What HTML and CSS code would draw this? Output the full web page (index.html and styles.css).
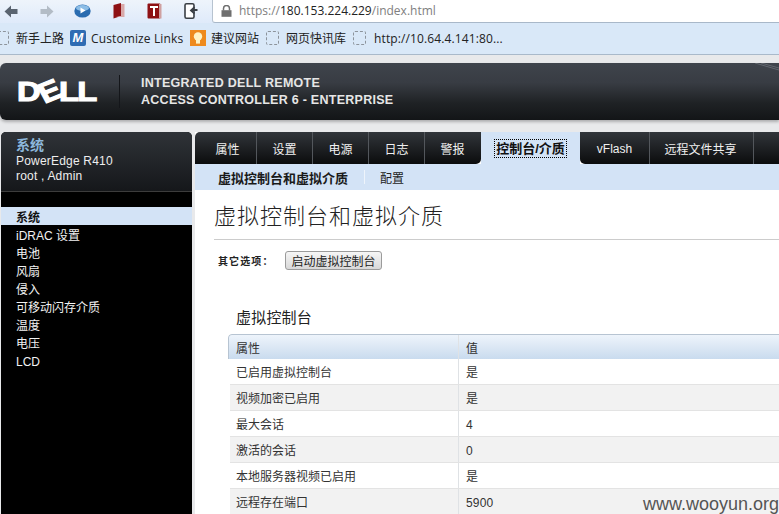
FILE: index.html
```html
<!DOCTYPE html>
<html lang="zh">
<head>
<meta charset="utf-8">
<title>iDRAC6</title>
<link rel="stylesheet" href="styles.css">
</head>
<body>
<div class="browser">
  <div class="nav-row">
    <div class="nav-icons">
      <svg class="ic ic-back" viewBox="0 0 14 13"><path d="M7 0.5 L0.5 6.5 L7 12.5 V9 H13.5 V4 H7 Z" fill="#5a6470"/></svg>
      <svg class="ic ic-fwd" viewBox="0 0 14 13"><path d="M7 0.5 L13.5 6.5 L7 12.5 V9 H0.5 V4 H7 Z" fill="#b3bcc6"/></svg>
      <svg class="ic ic-play" viewBox="0 0 17 14"><ellipse cx="8.5" cy="7" rx="8.2" ry="6.6" fill="#2a6cb0"/><ellipse cx="8.5" cy="4" rx="6.5" ry="3" fill="#8cbde6"/><path d="M6.5 3.5 L11.5 6.5 L6.5 9.5 Z" fill="#fff"/></svg>
      <svg class="ic ic-book" viewBox="0 0 12 16"><path d="M0.5 2 L8 0 V13 L0.5 15.5 Z" fill="#8e1114"/><path d="M8 1 H11.5 V14 H3 L8 13 Z" fill="#d9a9a9"/></svg>
      <svg class="ic ic-t" viewBox="0 0 15 16"><rect x="0.5" y="0.5" width="13" height="15" rx="1" fill="#8e1114"/><rect x="12" y="1" width="2.5" height="14.5" fill="#cfa0a0"/><path d="M3 3 H11 V5 H8 V13 H6 V5 H3 Z" fill="#fff"/></svg>
      <svg class="ic ic-exit" viewBox="0 0 14 16"><rect x="1" y="0.8" width="9" height="14.4" rx="1.5" fill="#fff" stroke="#3a3f45" stroke-width="1.6"/><path d="M13.5 7 H8 M10.5 4.2 L7 7.5 L10.5 10.5" fill="none" stroke="#3a3f45" stroke-width="1.8"/></svg>
    </div>
    <div class="address">
      <svg class="lock" viewBox="0 0 11 12"><path d="M2.5 5.5 V3.5 A3 3 0 0 1 8.5 3.5 V5.5" fill="none" stroke="#6f6f6f" stroke-width="1.5"/><rect x="0.5" y="5.2" width="10" height="6.6" fill="#6f6f6f"/></svg>
      <span class="url"><span class="url-dim">https://</span>180.153.224.229<span class="url-dim">/index.html</span></span>
    </div>
  </div>
  <div class="bookmarks">
    <span class="bm-blank bm-first"></span><span class="bm-label bm-a">新手上路</span>
    <span class="bm-m">M</span><span class="bm-label bm-b">Customize Links</span>
    <svg class="bm-bulb" viewBox="0 0 16 16"><rect width="16" height="16" fill="#ee8a1d"/><circle cx="8" cy="6.5" r="4.2" fill="#fff3c4"/><rect x="6" y="10" width="4" height="3.6" fill="#fff3c4"/></svg><span class="bm-label bm-c">建议网站</span>
    <span class="bm-blank"></span><span class="bm-label bm-d">网页快讯库</span>
    <span class="bm-blank"></span><span class="bm-label bm-e">http://10.64.4.141:80...</span>
  </div>
</div>

<div class="page">
  <header class="banner">
    <div class="logo">D<span class="logo-e">E</span>LL</div>
    <div class="banner-rule"></div>
    <div class="banner-title">INTEGRATED DELL REMOTE<br>ACCESS CONTROLLER 6 - ENTERPRISE</div>
    <svg class="banner-streak" viewBox="0 0 24 10"><path d="M0 0 L24 7 M6 0 L24 5" stroke="#7b8088" stroke-width="0.6" fill="none"/></svg>
  </header>

  <div class="columns">
    <aside class="sidebar">
      <div class="side-head">
        <div class="side-title">系统</div>
        <div class="side-sub">PowerEdge R410</div>
        <div class="side-sub side-user">root , Admin</div>
      </div>
      <ul class="tree">
        <li class="tree-on">系统</li>
        <li>iDRAC 设置</li>
        <li>电池</li>
        <li>风扇</li>
        <li>侵入</li>
        <li>可移动闪存介质</li>
        <li>温度</li>
        <li>电压</li>
        <li>LCD</li>
      </ul>
    </aside>

    <main class="content">
      <nav class="tabs">
        <span class="tab t1">属性</span>
        <span class="tab t2">设置</span>
        <span class="tab t2">电源</span>
        <span class="tab t2">日志</span>
        <span class="tab t2b tab-before">警报</span>
        <span class="tab-active"><span class="tab-focus">控制台/介质</span></span>
        <span class="tab t3 tab-after">vFlash</span>
        <span class="tab t4">远程文件共享</span>
        <span class="tab t5"></span>
      </nav>
      <div class="subnav">
        <span class="sub-on">虚拟控制台和虚拟介质</span>
        <span class="sub-rule"></span>
        <span class="sub-off">配置</span>
      </div>
      <h1 class="heading">虚拟控制台和虚拟介质</h1>
      <div class="options">
        <span class="options-label">其它选项：</span>
        <button class="launch" type="button">启动虚拟控制台</button>
      </div>
      <h2 class="section">虚拟控制台</h2>
      <div class="table">
        <div class="row head"><div class="c1">属性</div><div class="c2">值</div></div>
        <div class="row"><div class="c1">已启用虚拟控制台</div><div class="c2">是</div></div>
        <div class="row alt"><div class="c1">视频加密已启用</div><div class="c2">是</div></div>
        <div class="row"><div class="c1">最大会话</div><div class="c2">4</div></div>
        <div class="row alt"><div class="c1">激活的会话</div><div class="c2">0</div></div>
        <div class="row"><div class="c1">本地服务器视频已启用</div><div class="c2">是</div></div>
        <div class="row alt"><div class="c1">远程存在端口</div><div class="c2">5900</div></div>
      </div>
    </main>
  </div>
</div>
<div class="watermark">www.wooyun.org</div>
</body>
</html>
```
FILE: styles.css
```css
* { box-sizing: border-box; }
html, body { margin: 0; padding: 0; }
body {
  width: 779px;
  height: 514px;
  overflow: hidden;
  position: relative;
  background: #e8e9eb;
  font-family: "Liberation Sans", "Noto Sans CJK SC", sans-serif;
  font-size: 12px;
  color: #222;
}

/* browser chrome */
.browser { height: 55px; border-bottom: 1px solid #a9b9ca; background: #d9e8f8; overflow: hidden; }
.nav-row {
  height: 23px;
  display: flex;
  background: linear-gradient(#eef4fb, #dfeafa);
}
.nav-icons { width: 212px; position: relative; flex: none; display: flex; align-items: flex-start; }
.ic { display: block; flex: none; }
.ic-back { width: 14px; height: 13px; margin: 5px 0 0 4px; }
.ic-fwd { width: 14px; height: 13px; margin: 5px 0 0 22px; }
.ic-play { width: 17px; height: 14px; margin: 4px 0 0 20px; }
.ic-book { width: 12px; height: 16px; margin: 3px 0 0 22px; }
.ic-t { width: 15px; height: 16px; margin: 3px 0 0 22px; }
.ic-exit { width: 14px; height: 16px; margin: 3px 0 0 22px; }
.address {
  flex: 1;
  background: #fff;
  border-left: 1px solid #b7c3d0;
  border-bottom: 1px solid #a9b8c9;
  border-bottom-left-radius: 3px;
  display: flex;
  align-items: center;
  padding-left: 8px;
}
.lock { width: 11px; height: 12px; flex: none; }
.url { margin-left: 7px; font-family: "Open Sans", "Liberation Sans", sans-serif; font-size: 12px; color: #222; line-height: 24px; }
.url-dim { color: #808080; }

.bookmarks {
  height: 31px;
  display: flex;
  align-items: center;
  background: #d9e8f8;
  font-family: "Open Sans", "Noto Sans CJK SC", sans-serif;
  color: #222;
  padding-bottom: 1px;
}
.bm-label { white-space: nowrap; font-size: 12px; letter-spacing: 0.12px; }
.bm-blank { width: 13px; height: 14px; border: 1px dashed #8d949c; border-radius: 2px; flex: none; }
.bm-first { margin-left: -4px; width: 13px; }
.bm-a { margin-left: 7px; width: 54px; letter-spacing: 0; }
.bm-m {
  width: 16px; height: 16px; flex: none;
  background: #2f6cb3; color: #fff;
  font: italic bold 13px/16px "Liberation Sans", sans-serif;
  text-align: center; border-radius: 2px;
}
.bm-b { margin-left: 5px; width: 99px; }
.bm-bulb { width: 16px; height: 16px; flex: none; }
.bm-c { margin-left: 5px; width: 55px; letter-spacing: 0; }
.bm-d { margin-left: 7px; width: 67px; letter-spacing: 0; }
.bm-e { margin-left: 8px; }

/* page */
.page { padding: 8px 0 0; }
.banner {
  height: 57px;
  display: flex;
  align-items: center;
  position: relative;
  border-radius: 6px 0 0 6px;
  background: linear-gradient(#3f444c 0%, #383c43 35%, #1f2225 70%, #131517 100%);
  box-shadow: 0 2px 3px rgba(0,0,0,.25);
  padding-left: 17px;
}
.logo {
  width: 81px;
  flex: none;
  font-family: "Liberation Sans", sans-serif;
  font-weight: bold;
  font-size: 28px;
  line-height: 28px;
  color: #fff;
  letter-spacing: -1.5px;
  transform: scaleX(1.17);
  transform-origin: left center;
  white-space: nowrap;
  -webkit-text-stroke: 1.1px #fff;
}
.logo-e { display: inline-block; transform: rotate(-25deg); }
.banner-rule { width: 1px; height: 33px; margin-left: 21px; background: #14161a; flex: none; }
.banner-title {
  margin-left: 21px;
  font-weight: bold;
  font-size: 12.5px;
  line-height: 17px;
  color: #e6e6e6;
  letter-spacing: 0.27px;
  padding-top: 1px;
}
.banner-streak { position: absolute; right: 0; top: 0; width: 24px; height: 10px; }

.columns {
  display: flex;
  gap: 3px;
  margin-top: 12px;
  padding-left: 1px;
  height: 400px;
}
.sidebar { width: 191px; flex: none; background: #000; border-radius: 5px 5px 0 0; color: #fff; overflow: hidden; }
.side-head {
  height: 60px;
  padding: 5px 0 0 15px;
  background: linear-gradient(#2f3338, #15171a);
  border-bottom: 1px solid #3c3c3c;
}
.side-title { color: #8db8dc; font-size: 14px; line-height: 17px; font-weight: bold; }
.side-sub { font-size: 12px; line-height: 15px; color: #eee; letter-spacing: 0.2px; }
.tree { list-style: none; margin: 15px 0 0; padding: 0; }
.tree li { height: 18px; line-height: 23px; padding-left: 15px; font-size: 12px; color: #f2f2f2; }
.tree .tree-on { background: #d3e3f6; color: #111; font-weight: bold; }

.content { flex: 1; min-width: 0; background: #fff; overflow: hidden; }
.tabs { display: flex; height: 32px; color: #f0f0f0; }
.tab {
  display: flex; align-items: center; justify-content: center;
  height: 32px; flex: none;
  padding-top: 1px;
  background: linear-gradient(#31353a, #0b0c0d);
  border-left: 1px solid #53575c;
  font-size: 12px;
}
.t1 { width: 61px; border-left: 0; border-radius: 5px 0 0 0; padding-left: 4px; }
.t2 { width: 56px; }
.t2b { width: 57px; padding-right: 1px; }
.tab-before { border-radius: 0 0 5px 0; }
.tab-after { border-left: 0; border-radius: 0 0 0 5px; }
.t3 { width: 69px; }
.t4 { width: 104px; padding-right: 2px; }
.t5 { width: 40px; }
.tab-active {
  width: 99px; flex: none;
  display: flex; align-items: center; justify-content: center;
  background: #d3e3f6; color: #111; font-weight: bold; font-size: 13px;
  padding-top: 1px;
}
.tab-focus { outline: 1px dotted #000; padding: 1px 1px; line-height: 15px; }
.subnav {
  height: 26px;
  background: #d3e3f6;
  display: flex;
  align-items: center;
  padding-left: 23px;
}
.sub-on { font-weight: bold; color: #1a1a1a; font-size: 13px; width: 129px; white-space: nowrap; }
.sub-rule { width: 1px; height: 14px; background: #eef4fb; margin-left: 17px; }
.sub-off { margin-left: 15px; font-size: 12px; }

.heading {
  margin: 0 0 0 19px;
  height: 50px;
  padding-top: 12px;
  border-bottom: 1px solid #ccc;
  font-size: 22px;
  line-height: 29px;
  font-weight: 300;
  letter-spacing: 1px;
  color: #222;
  white-space: nowrap;
}
.options { display: flex; align-items: center; height: 19px; margin: 11px 0 0 23px; }
.options-label { width: 67px; flex: none; font-size: 10px; font-weight: bold; letter-spacing: 1.1px; color: #222; }
.launch {
  width: 97px; height: 19px; padding: 0;
  border: 1px solid #9b9b9b;
  border-radius: 3px;
  background: linear-gradient(#f6f6f6, #d8d8d8);
  font: 12px "Noto Sans CJK SC", sans-serif;
  color: #222;
}
.section {
  margin: 37px 0 0 41px;
  height: 20px;
  font-size: 15px;
  line-height: 21px;
  font-weight: 400;
  letter-spacing: 0.2px;
  color: #222;
}
.table { margin: 7px 0 0 33px; width: 600px; border-top-left-radius: 4px; overflow: hidden; }
.row { display: flex; height: 26px; margin-left: 2px; border-bottom: 1px solid #e3e3e3; background: #fff; color: #333; line-height: 29px; }
.row.alt { background: #f2f2f2; }
.row.head {
  height: 25px;
  margin-left: 0;
  border: 1px solid #b7c4d2;
  border-bottom: 0;
  border-radius: 4px 0 0 0;
  background: linear-gradient(#eef4fb, #c9dbee);
}
.c1 { width: 229px; flex: none; padding-left: 6px; border-right: 1px solid #dfe2e5; }
.c2 { flex: 1; padding-left: 7px; letter-spacing: 0.2px; }
.row.head .c1 { width: 230px; padding-left: 7px; }

.watermark {
  position: absolute;
  right: 0;
  bottom: 0;
  font-size: 18px;
  line-height: 20px;
  color: #555;
}
```
